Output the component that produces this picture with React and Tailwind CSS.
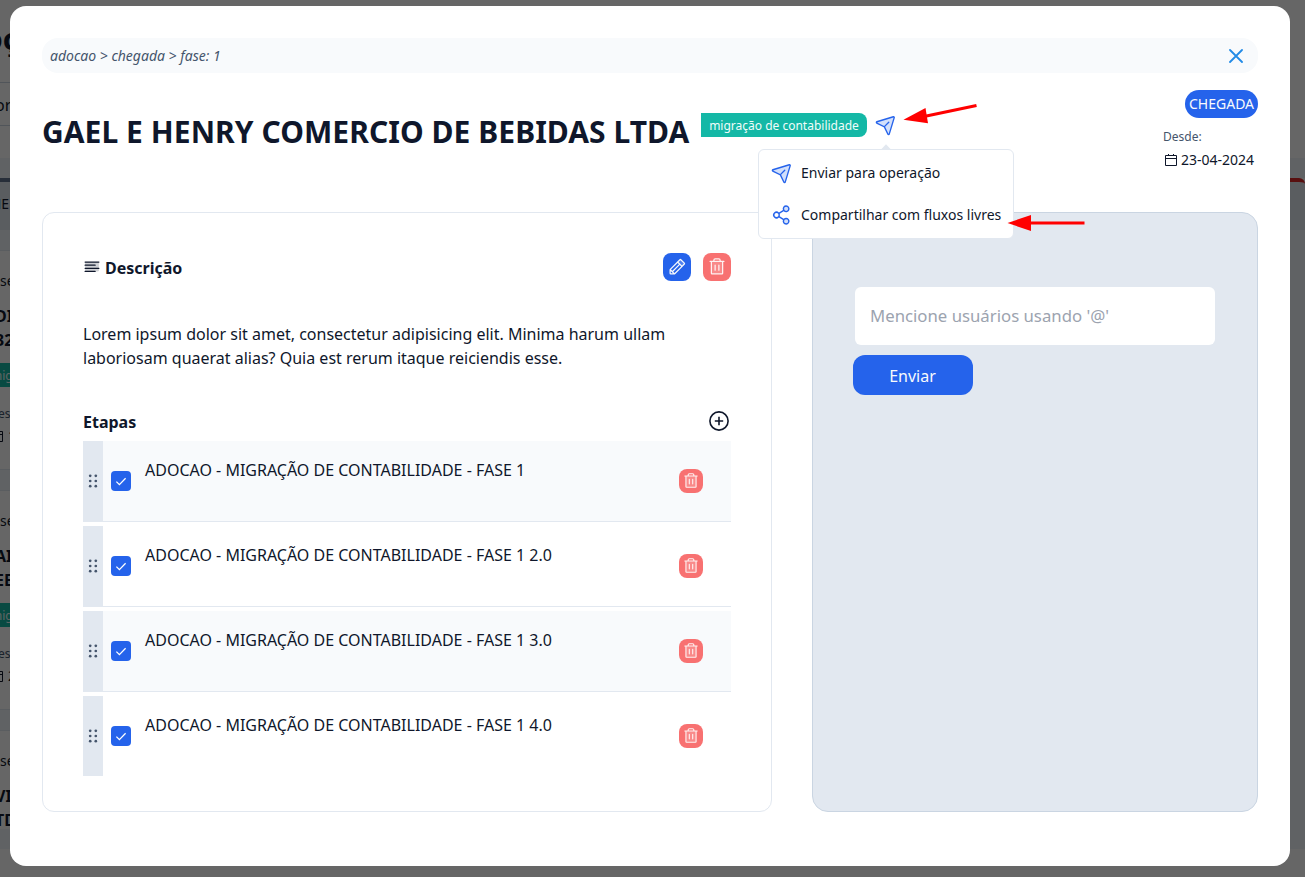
import React from "react";
import {
  PiPaperPlaneTiltDuotone,
  PiShareNetworkDuotone,
  PiTrashDuotone,
  PiPencilDuotone,
  PiTextAlignLeftDuotone,
} from "react-icons/pi";

const steps = [
  "ADOCAO - MIGRAÇÃO DE CONTABILIDADE - FASE 1",
  "ADOCAO - MIGRAÇÃO DE CONTABILIDADE - FASE 1 2.0",
  "ADOCAO - MIGRAÇÃO DE CONTABILIDADE - FASE 1 3.0",
  "ADOCAO - MIGRAÇÃO DE CONTABILIDADE - FASE 1 4.0",
];

const cards = [
  { a: "DI", b: "32", d: "1" },
  { a: "AI", b: "EE", d: "2" },
  { a: "VI", b: "TD", d: "2" },
];

function CalendarIcon({ className }) {
  return (
    <svg className={className} viewBox="0 0 14 14" fill="none" stroke="currentColor">
      <path d="M1.5 2.5h11v10h-11zM1.5 5.5h11" />
      <path d="M4.5 1v2M9.5 1v2" />
    </svg>
  );
}

function GripIcon() {
  return (
    <svg className="h-4 w-3 text-slate-600" viewBox="0 0 12 16" fill="currentColor">
      {[2.8, 8, 13.2].map((y) => (
        <g key={y}>
          <circle cx="3.2" cy={y} r="1.35" />
          <circle cx="8.8" cy={y} r="1.35" />
        </g>
      ))}
    </svg>
  );
}

function BoardCard({ card }) {
  return (
    <div className="mb-5 h-[220px] shrink-0 border-y border-slate-200 bg-white pt-5 whitespace-nowrap text-slate-900">
      <div className="h-5 text-sm">se</div>
      <div className="mt-[13px] -ml-[5px] h-6 text-base font-bold">{card.a}</div>
      <div className="-ml-[5px] h-6 text-base font-bold">{card.b}</div>
      <div className="mt-[11px] flex h-6 items-center bg-[#14b8a6] pt-[1px] text-xs text-teal-50">
        <span className="-ml-[9px]">mig</span>
      </div>
      <div className="mt-[19px] -ml-[2px] h-4 text-xs text-slate-600">es</div>
      <div className="mt-1 flex h-5 items-center gap-1 text-sm">
        <CalendarIcon className="-ml-[10px] h-[14px] w-[14px] shrink-0" />
        {card.d}
      </div>
    </div>
  );
}

function Board() {
  return (
    <div className="flex h-[877px] justify-between bg-white">
      <div className="flex w-[10px] flex-col overflow-hidden text-slate-900">
        <div className="flex h-[83px] shrink-0 items-center border-b border-slate-300 text-3xl font-bold">
          <span className="mb-1 -ml-[16px]">oç</span>
        </div>
        <div className="flex h-[43px] shrink-0 items-center border-b border-slate-300 text-base">
          <span className="-ml-[5px] pt-[2px]">or</span>
        </div>
        <div className="h-8 shrink-0" />
        <div className="h-5 shrink-0 bg-slate-100" />
        <div className="flex h-[52px] shrink-0 items-center border-t-4 border-slate-500 bg-slate-200 text-sm">
          <span className="mb-1 -ml-[9px]">HE</span>
        </div>
        <div className="h-5 shrink-0 bg-slate-100" />
        <div className="flex h-[579px] shrink-0 flex-col overflow-hidden bg-slate-100">
          {cards.map((c) => (
            <BoardCard key={c.a} card={c} />
          ))}
        </div>
        <div className="h-5 shrink-0 bg-slate-100" />
      </div>
      <div className="flex w-[15px] flex-col overflow-hidden">
        <div className="h-[158px] shrink-0" />
        <div className="h-5 shrink-0 bg-slate-100" />
        <div className="h-[52px] shrink-0 rounded-tr-md border-t-4 border-[#dc2626] bg-slate-200" />
        <div className="h-[619px] shrink-0 bg-slate-100" />
      </div>
    </div>
  );
}

function SendMenu() {
  return (
    <div className="absolute top-[35px] -left-[117px] z-10 w-[256px]">
      <svg className="absolute -top-[5px] left-[122px] h-[6px] w-3" viewBox="0 0 12 6">
        <path d="M0.5 6 6 0.3 11.5 6z" fill="#e2e8f0" />
      </svg>
      <div className="flex h-[90px] flex-col rounded-md border border-slate-200 bg-white py-[2px] pl-3 text-sm whitespace-nowrap text-slate-900">
        <div className="flex h-[42px] items-center gap-2">
          <PiPaperPlaneTiltDuotone className="h-[22px] w-[22px] text-[#2563eb]" />
          Enviar para operação
        </div>
        <div className="flex h-[42px] items-center gap-2">
          <PiShareNetworkDuotone className="h-[22px] w-[22px] text-[#2563eb]" />
          Compartilhar com fluxos livres
        </div>
      </div>
    </div>
  );
}

function Header() {
  return (
    <header className="mt-[17px] flex h-[122px] items-start justify-between">
      <div className="mt-[23px] flex items-start gap-3">
        <h1 className="w-[647px] pt-[1px] text-[30px] leading-9 font-bold tracking-[0.05px] whitespace-nowrap text-slate-900">
          GAEL E HENRY COMERCIO DE BEBIDAS LTDA
        </h1>
        <div className="flex items-center gap-2">
          <span className="flex h-6 w-[166px] items-center justify-center rounded-r-lg bg-[#14b8a6] pt-[1px] text-xs whitespace-nowrap text-teal-50">
            migração de contabilidade
          </span>
          <div className="relative">
            <PiPaperPlaneTiltDuotone className="h-[22px] w-[22px] text-[#2563eb]" />
            <SendMenu />
          </div>
        </div>
      </div>
      <div className="flex w-[95px] flex-col">
        <span className="flex h-7 w-[73px] items-center justify-center self-end rounded-full bg-[#2563eb] text-sm text-slate-50">
          CHEGADA
        </span>
        <span className="mt-[11px] text-xs text-slate-600">Desde:</span>
        <span className="mt-[5px] flex h-5 items-center gap-[3px] pl-[1px] text-sm whitespace-nowrap text-slate-900">
          <CalendarIcon className="h-[14px] w-[14px]" />
          23-04-2024
        </span>
      </div>
    </header>
  );
}

function Step({ text, index, last }) {
  return (
    <li
      className={[
        "flex",
        last ? "h-20" : "h-[81px]",
        index % 2 === 0 ? "bg-slate-50" : "bg-white",
      ].join(" ")}
    >
      <div className={last ? "flex w-5 items-center justify-center bg-slate-200" : "flex w-5 items-center justify-center bg-slate-200 pb-[1px]"}>
        <GripIcon />
      </div>
      <div
        className={
          last
            ? "flex flex-1 items-center pl-2"
            : "flex flex-1 items-center border-b border-slate-200 pl-2"
        }
      >
        <span className="flex h-5 w-5 items-center justify-center rounded bg-[#2563eb]">
          <svg className="h-3 w-3" viewBox="0 0 12 12" fill="none" stroke="white" strokeWidth="1.3">
            <path d="m1.4 6.6 3 3 6.2-6.4" />
          </svg>
        </span>
        <p className="ml-[14px] flex-1 self-start pt-[17px] text-base text-slate-900">{text}</p>
        <button className="mr-7 flex h-6 w-6 items-center justify-center rounded-lg bg-[#f87171] text-red-50">
          <PiTrashDuotone className="h-[18px] w-[18px]" />
        </button>
      </div>
    </li>
  );
}

function Description() {
  return (
    <section className="flex w-[730px] flex-col rounded-xl border border-slate-200 px-10 pt-10 text-slate-900">
      <div className="flex h-7 items-center justify-between">
        <div className="flex items-center gap-[3px]">
          <PiTextAlignLeftDuotone className="-ml-[1px] h-5 w-5" />
          <h2 className="mt-[2px] text-base font-bold">Descrição</h2>
        </div>
        <div className="flex gap-3">
          <button className="flex h-7 w-7 items-center justify-center rounded-lg bg-[#2563eb] text-slate-50">
            <PiPencilDuotone className="h-5 w-5" />
          </button>
          <button className="flex h-7 w-7 items-center justify-center rounded-lg bg-[#f87171] text-red-50">
            <PiTrashDuotone className="h-5 w-5" />
          </button>
        </div>
      </div>
      <p className="mt-[41px] text-base">
        Lorem ipsum dolor sit amet, consectetur adipisicing elit. Minima harum ullam laboriosam quaerat alias? Quia est
        rerum itaque reiciendis esse.
      </p>
      <div className="mt-[38px] flex h-[33px] items-center justify-between">
        <h2 className="mt-[-5px] text-base font-bold">Etapas</h2>
        <svg className="mr-[2px] mb-2 h-5 w-5" viewBox="0 0 20 20" fill="none" stroke="currentColor" strokeWidth="1.6">
          <circle cx="10" cy="10" r="9.1" />
          <path d="M10 5.8v8.4M5.8 10h8.4" />
        </svg>
      </div>
      <ul className="flex flex-col gap-1">
        {steps.map((s, i) => (
          <Step key={s} text={s} index={i} last={i === steps.length - 1} />
        ))}
      </ul>
    </section>
  );
}

function Arrows() {
  return (
    <svg className="pointer-events-none absolute top-[94px] left-[890px] z-20 h-[144px] w-[190px]" viewBox="900 100 190 144">
      <path d="M924 116.5 976.5 105.5" stroke="#f00" strokeWidth="3" />
      <path d="M903.5 119.8 925.5 108 928 123.2z" fill="#f00" />
      <path d="M1028 223H1084.5" stroke="#f00" strokeWidth="3" />
      <path d="M1007.5 223 1031 215v16z" fill="#f00" />
    </svg>
  );
}

export default function App() {
  return (
    <div className="relative h-[877px] w-[1305px] overflow-hidden font-['Noto_Sans',sans-serif]">
      <Board />
      <div className="absolute inset-0 bg-black/60 pt-[6px] pl-[10px]">
        <main className="relative h-[860px] w-[1280px] rounded-2xl bg-white p-8">
          <div className="flex h-[35px] items-center justify-between rounded-2xl bg-slate-50 pr-[15px] pl-2">
            <span className="text-sm text-slate-600 italic">adocao &gt; chegada &gt; fase: 1</span>
            <svg className="h-[14px] w-[14px]" viewBox="0 0 14 14" fill="none" stroke="#228be6" strokeWidth="1.8" strokeLinecap="round">
              <path d="m1 1 12 12M13 1 1 13" />
            </svg>
          </div>
          <Header />
          <div className="flex h-[600px] gap-10">
            <Description />
            <section className="flex flex-1 flex-col rounded-2xl border border-slate-300 bg-slate-200 pt-[74px] pl-10">
              <div className="ml-[2px] flex h-[58px] w-[360px] items-center rounded-md bg-white pl-[15px] text-[16.75px] text-[#9ca3af]">
                Mencione usuários usando '@'
              </div>
              <button className="mt-[10px] h-10 w-[120px] rounded-xl bg-[#2563eb] pt-[2px] pr-[1px] text-base text-slate-50">
                Enviar
              </button>
            </section>
          </div>
          <Arrows />
        </main>
      </div>
    </div>
  );
}
